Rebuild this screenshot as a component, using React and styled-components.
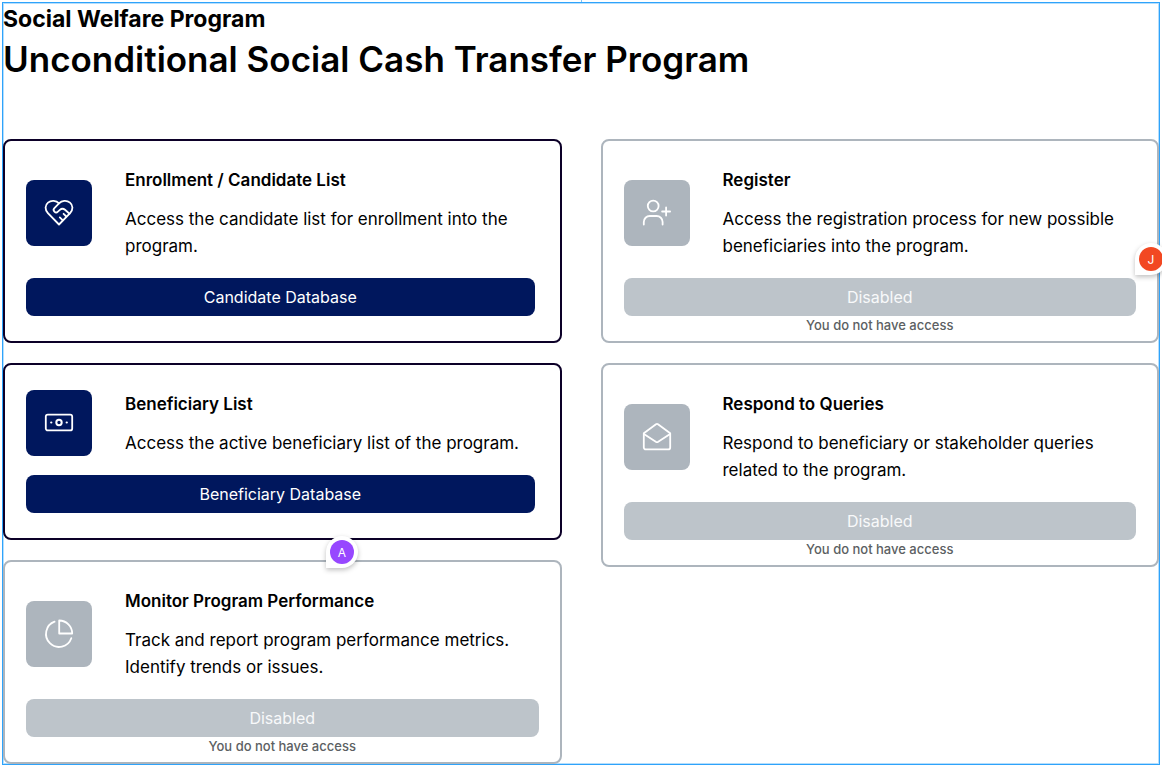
import React from "react";
import styled, { createGlobalStyle } from "styled-components";

const GlobalStyle = createGlobalStyle`
  *, *::before, *::after { box-sizing: border-box; }
  body {
    margin: 0;
    background: #fff;
    color: #000;
    font-family: Inter, "Liberation Sans", sans-serif;
  }
`;

const Page = styled.div`
  padding: 2px;
  position: relative;
  overflow: hidden;
`;

const CenterTick = styled.span`
  position: absolute;
  top: 0;
  left: 50%;
  width: 1px;
  height: 2px;
  background: #7cc4f8;
`;

const Frame = styled.main`
  position: relative;
  border: 1px solid #2ea3fb;
  box-shadow: inset 0 0 0 1px #b5defc;
`;

const Header = styled.header`
  padding-bottom: 56px;
`;

const Eyebrow = styled.p`
  margin: 0;
  font-size: 23px;
  line-height: 32px;
  font-weight: 700;
`;

const Title = styled.h1`
  margin: 0;
  font-size: 35px;
  line-height: 48px;
  font-weight: 600;
`;

const Columns = styled.div`
  display: grid;
  grid-template-columns: 1fr 1fr;
  gap: 39px;
  align-items: start;
`;

const Column = styled.div`
  display: flex;
  flex-direction: column;
  gap: 20px;
`;

const Card = styled.section`
  position: relative;
  display: flex;
  flex-direction: column;
  border: 2px solid ${(p) => (p.$disabled ? "#adb5bd" : "#0c0028")};
  border-radius: 8px;
  padding: ${(p) => (p.$disabled ? "24px 21px 6px" : "24px 25px 25px 21px")};
`;

const Summary = styled.div`
  display: flex;
  align-items: center;
  gap: 33px;
  margin-bottom: 18px;
`;

const IconTile = styled.div`
  flex: none;
  display: grid;
  place-items: center;
  width: 66px;
  height: 66px;
  border-radius: 8px;
  background: ${(p) => (p.$disabled ? "#adb5bd" : "#00175d")};
`;

const Copy = styled.div`
  flex: 1;
  min-width: 0;
  padding-top: 2px;
`;

const CardTitle = styled.h2`
  margin: 0 0 12px;
  font-size: 17px;
  line-height: 27px;
  font-weight: 600;
`;

const Description = styled.p`
  margin: 0;
  font-size: 17px;
  line-height: 27px;
`;

const Action = styled.button`
  width: 100%;
  height: 38px;
  border: 0;
  border-radius: 8px;
  padding: 0 16px;
  background: #00175d;
  color: #fff;
  font: 400 16px/24px Inter, "Liberation Sans", sans-serif;
  cursor: pointer;

  &:disabled {
    background: #bdc4ca;
    color: #f8f9fa;
    cursor: default;
  }
`;

const Note = styled.p`
  margin: 0;
  font-size: 13px;
  line-height: 19px;
  font-weight: 500;
  color: #5c5f63;
  text-align: center;
`;

const Comment = styled.div`
  position: absolute;
  z-index: 1;
  width: 32px;
  height: 32px;
  padding: 4px;
  border-radius: 16px 16px 16px 0;
  background: #fff;
  box-shadow: 0 2px 5px rgba(0, 0, 0, 0.25);
`;

const CandidateComment = styled(Comment)`
  top: 102px;
  right: -10px;
`;

const PerformanceComment = styled(Comment)`
  top: -26px;
  left: 321px;
`;

const Avatar = styled.span`
  display: block;
  width: 24px;
  height: 24px;
  border-radius: 50%;
  background: ${(p) => p.$color};
  color: #fff;
  font-size: 12px;
  line-height: 25px;
  text-align: center;
`;

const Icon = ({ children }) => (
  <svg
    width="32"
    height="32"
    viewBox="0 0 32 32"
    fill="none"
    stroke="#fff"
    strokeWidth="1.8"
    strokeLinecap="round"
    strokeLinejoin="round"
    aria-hidden="true"
  >
    {children}
  </svg>
);

const HeartHandsIcon = () => (
  <Icon>
    <path d="M16 27.500 4.900 16.100C1.700 12.700 1.900 8.100 5 5.600C8.300 2.900 13.300 3.500 16 6.300C18.700 3.500 23.700 2.900 27 5.600C30.100 8.100 30.300 12.700 27.100 16.100Z" />
    <path d="M16 6.300 11.400 11.100a2.500 2.500 0 0 0 0 3.500c1 1 2.500 1 3.500 0l2-1.800c1.500-1.300 3.600-1.300 5.100 0l4.500 3.900" />
    <path d="M20.600 16.800 23.300 19.500" />
    <path d="M16.800 20.400 19.600 23.200" />
  </Icon>
);

const UserPlusIcon = () => (
  <Icon>
    <circle cx="12.200" cy="9" r="5.400" />
    <path d="M2.800 27.500v-2.500a6 6 0 0 1 6-6h6.800a6 6 0 0 1 6 6V27.500M21.100 14.500h8M25.100 10.500v8" />
  </Icon>
);

const BanknoteIcon = () => (
  <Icon>
    <rect x="2.800" y="7.600" width="26.400" height="15.800" rx="2" />
    <circle cx="16" cy="15.500" r="2.700" strokeWidth="2" />
    <path d="M8.200 15.500h.100M23.700 15.500h.100" strokeWidth="2.200" />
  </Icon>
);

const OpenMailIcon = () => (
  <Icon>
    <path d="M2.800 12.200 15 3.300a1.700 1.700 0 0 1 2 0l12.200 8.900v14.200a2 2 0 0 1-2 2H4.800a2 2 0 0 1-2-2Z" />
    <path d="m2.900 13 11.900 7.800a2.300 2.300 0 0 0 2.400 0l11.900-7.800" />
  </Icon>
);

const PieIcon = () => (
  <Icon>
    <path d="M16.200 2.500v13h13a13 13 0 0 0-13-13Z" />
    <path d="M11.600 3.700a13 13 0 1 0 16.700 16.500" />
  </Icon>
);

function ProgramCard({ icon, title, description, action, disabled, children }) {
  return (
    <Card $disabled={disabled}>
      <Summary>
        <IconTile $disabled={disabled}>{icon}</IconTile>
        <Copy>
          <CardTitle>{title}</CardTitle>
          <Description>{description}</Description>
        </Copy>
      </Summary>
      <Action type="button" disabled={disabled}>
        {disabled ? "Disabled" : action}
      </Action>
      {disabled && <Note>You do not have access</Note>}
      {children}
    </Card>
  );
}

export default function App() {
  return (
    <>
      <GlobalStyle />
      <Page>
        <CenterTick />
        <Frame>
          <Header>
            <Eyebrow>Social Welfare Program</Eyebrow>
            <Title>Unconditional Social Cash Transfer Program</Title>
          </Header>
          <Columns>
            <Column>
              <ProgramCard
                icon={<HeartHandsIcon />}
                title="Enrollment / Candidate List"
                description="Access the candidate list for enrollment into the program."
                action="Candidate Database"
              />
              <ProgramCard
                icon={<BanknoteIcon />}
                title="Beneficiary List"
                description="Access the active beneficiary list of the program."
                action="Beneficiary Database"
              />
              <ProgramCard
                icon={<PieIcon />}
                title="Monitor Program Performance"
                description="Track and report program performance metrics. Identify trends or issues."
                disabled
              >
                <PerformanceComment>
                  <Avatar $color="#9747ff">A</Avatar>
                </PerformanceComment>
              </ProgramCard>
            </Column>
            <Column>
              <ProgramCard
                icon={<UserPlusIcon />}
                title="Register"
                description="Access the registration process for new possible beneficiaries into the program."
                disabled
              >
                <CandidateComment>
                  <Avatar $color="#f24822">J</Avatar>
                </CandidateComment>
              </ProgramCard>
              <ProgramCard
                icon={<OpenMailIcon />}
                title="Respond to Queries"
                description="Respond to beneficiary or stakeholder queries related to the program."
                disabled
              />
            </Column>
          </Columns>
        </Frame>
      </Page>
    </>
  );
}
